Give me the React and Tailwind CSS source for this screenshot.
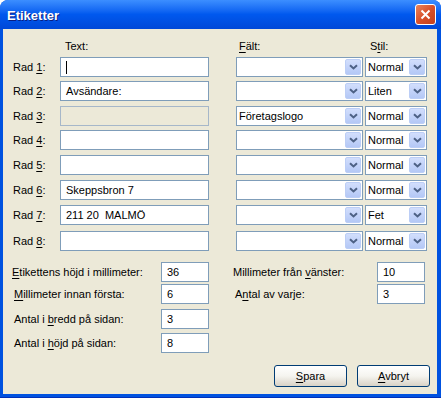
import React from "react";

const rows = [
  { n: "1", text: "", falt: "", stil: "Normal", mt: "mt-0", caret: true },
  { n: "2", text: "Avsändare:", falt: "", stil: "Liten", mt: "mt-[4px]" },
  { n: "3", text: "", falt: "Företagslogo", stil: "Normal", mt: "mt-[5px]", disabled: true },
  { n: "4", text: "", falt: "", stil: "Normal", mt: "mt-[4px]" },
  { n: "5", text: "", falt: "", stil: "Normal", mt: "mt-[5px]" },
  { n: "6", text: "Skeppsbron 7", falt: "", stil: "Normal", mt: "mt-[5px]" },
  { n: "7", text: "211 20  MALMÖ", falt: "", stil: "Fet", mt: "mt-[5px]" },
  { n: "8", text: "", falt: "", stil: "Normal", mt: "mt-[6px]" },
];

function U({ children }) {
  return <span className="underline underline-offset-[2px]">{children}</span>;
}

function Arrow() {
  return (
    <div className="w-[16px] h-[16px] my-[1px] mr-[1px] rounded-[2px] border border-[#BCCEF6] bg-gradient-to-b from-[#D2DEFC] to-[#B4C8F6] flex items-center justify-center">
      <svg width="9" height="6" viewBox="0 0 9 6">
        <path d="M1 1.2 L4.5 4.5 L8 1.2" fill="none" stroke="#4D6185" strokeWidth="2" />
      </svg>
    </div>
  );
}

function Combo({ value, w }) {
  return (
    <div className={`${w} h-[20px] border border-[#7F9DB9] bg-white flex items-center`}>
      <span className="flex-1 pl-[2px] whitespace-nowrap">{value}</span>
      <Arrow />
    </div>
  );
}

function Edit({ value, w = "w-[48px]", disabled, caret }) {
  return (
    <div
      className={`${w} h-[20px] border flex items-center pl-[5px] whitespace-pre ${
        disabled ? "bg-[#ECE9D8] border-[#A6B7C9]" : "bg-white border-[#7F9DB9]"
      }`}
    >
      {caret && <span className="w-[1px] h-[13px] bg-black" />}
      {value}
    </div>
  );
}

function Button({ children }) {
  return (
    <div className="w-[73px] h-[22px] rounded-[3px] border border-[#003C74] bg-gradient-to-b from-[#FFFFFF] via-[#F5F4EF] to-[#D8D2C6] flex items-center justify-center">
      {children}
    </div>
  );
}

export default function App() {
  return (
    <div className="w-[441px] h-[398px] flex flex-col rounded-t-[8px] bg-[#0052E0] border-b border-[#0030B8] font-['Liberation_Sans',Arial,sans-serif] text-black">
      {/* Title bar */}
      <div className="h-[29px] shrink-0 rounded-t-[8px] bg-gradient-to-b from-[#3C8EFF] via-[#0058EE] to-[#0048D8] flex items-center justify-between pl-[7px] pr-[5px]">
        <span className="text-white font-bold text-[13px] pt-[3px] [text-shadow:1px_1px_0_#0A1E80]">Etiketter</span>
        <div className="w-[21px] h-[21px] rounded-[3px] border border-white bg-gradient-to-br from-[#E8845C] via-[#D8502A] to-[#C4401C] flex items-center justify-center">
          <svg width="11" height="11" viewBox="0 0 11 11">
            <path d="M1.5 1.5 L9.5 9.5 M9.5 1.5 L1.5 9.5" stroke="white" strokeWidth="2" />
          </svg>
        </div>
      </div>

      {/* Client area */}
      <div className="flex-1 ml-[3px] mr-[4px] mb-[3px] bg-[#ECE9D8] flex flex-col text-[11px] leading-[13px]">
        {/* Column headers */}
        <div className="flex mt-[11px] h-[13px]">
          <span className="ml-[62px] w-[174px]">Text:</span>
          <span className="w-[131px]"><U>F</U>ält:</span>
          <span>S<U>t</U>il:</span>
        </div>

        {/* Rows */}
        <div className="flex flex-col mt-[4px]">
          {rows.map((r) => (
            <div key={r.n} className={`flex items-center ${r.mt}`}>
              <span className="w-[57px] pl-[10px]">
                Rad <U>{r.n}</U>:
              </span>
              <Edit value={r.text} w="w-[149px]" disabled={r.disabled} caret={r.caret} />
              <div className="w-[27px]" />
              <Combo value={r.falt} w="w-[127px]" />
              <div className="w-[2px]" />
              <Combo value={r.stil} w="w-[62px]" />
            </div>
          ))}
        </div>

        {/* Bottom fields */}
        <div className="flex mt-[11px]">
          <div className="w-[206px] flex flex-col">
            <div className="flex items-center pl-[9px]">
              <span className="flex-1"><U>E</U>tikettens höjd i millimeter:</span>
              <Edit value="36" />
            </div>
            <div className="flex items-center pl-[11px] mt-[2px]">
              <span className="flex-1"><U>M</U>illimeter innan första:</span>
              <Edit value="6" />
            </div>
            <div className="flex items-center pl-[11px] mt-[5px]">
              <span className="flex-1">Antal i <U>b</U>redd på sidan:</span>
              <Edit value="3" />
            </div>
            <div className="flex items-center pl-[11px] mt-[4px]">
              <span className="flex-1">Antal i <U>h</U>öjd på sidan:</span>
              <Edit value="8" />
            </div>
          </div>
          <div className="ml-[24px] w-[192px] flex flex-col">
            <div className="flex items-center">
              <span className="flex-1">Millimeter från <U>v</U>änster:</span>
              <Edit value="10" />
            </div>
            <div className="flex items-center pl-[2px] mt-[2px]">
              <span className="flex-1">A<U>n</U>tal av varje:</span>
              <Edit value="3" />
            </div>
          </div>
        </div>

        {/* Buttons */}
        <div className="flex justify-end gap-[10px] mt-[12px] pr-[7px]">
          <Button><U>S</U>para</Button>
          <Button><U>A</U>vbryt</Button>
        </div>
      </div>
    </div>
  );
}
